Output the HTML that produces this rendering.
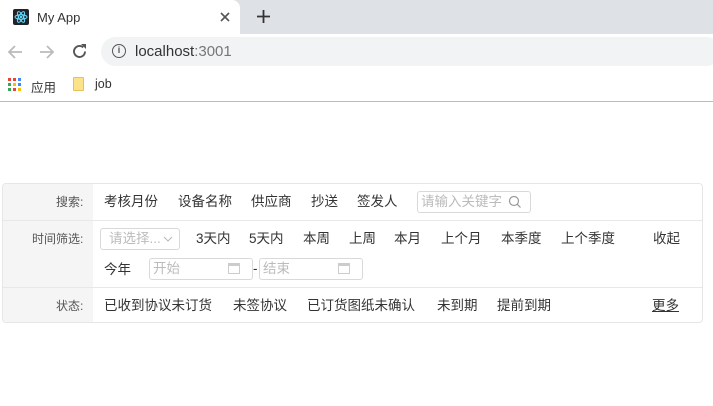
<!DOCTYPE html>
<html><head><meta charset="utf-8"><style>
*{margin:0;padding:0;box-sizing:border-box}
body{width:713px;height:406px;overflow:hidden;background:#fff;font-family:"Liberation Sans","Noto Sans CJK SC",sans-serif;position:relative}
.a{position:absolute;white-space:nowrap}
.t{font-size:13.5px;color:#333;line-height:16px}
.lab{font-size:12px;color:#555;line-height:16px}
.ph{color:#bbb}
.box{position:absolute;border:1px solid #d9d9d9;border-radius:3px;background:#fff}
</style></head><body>
<div class="a" style="left:0;top:0;width:713px;height:34px;background:#dee1e6"></div>
<div class="a" style="left:0;top:0;width:240px;height:34px;background:#fff;border-radius:0 8px 0 0"></div>
<div class="a" style="left:13px;top:9px;width:16px;height:16px;background:#20232a;border-radius:2px"><svg width="16" height="16" viewBox="0 0 16 16"><g fill="none" stroke="#61dafb" stroke-width="1"><ellipse cx="8" cy="8" rx="6" ry="2.3"/><ellipse cx="8" cy="8" rx="6" ry="2.3" transform="rotate(60 8 8)"/><ellipse cx="8" cy="8" rx="6" ry="2.3" transform="rotate(120 8 8)"/></g><circle cx="8" cy="8" r="1.2" fill="#61dafb"/></svg></div>
<div class="a" style="left:37px;top:10px;font-size:13px;color:#333">My App</div>
<svg class="a" style="left:220px;top:12px" width="10" height="10" viewBox="0 0 10 10"><path d="M1 1L9 9M9 1L1 9" stroke="#555" stroke-width="1.6"/></svg>
<svg class="a" style="left:257px;top:10px" width="13" height="13" viewBox="0 0 13 13"><path d="M6.5 0V13M0 6.5H13" stroke="#333" stroke-width="1.8"/></svg>
<svg class="a" style="left:7px;top:44px" width="16" height="16" viewBox="0 0 16 16"><path d="M15 8H2M8 2L2 8L8 14" fill="none" stroke="#bbb" stroke-width="1.8"/></svg>
<svg class="a" style="left:39px;top:44px" width="16" height="16" viewBox="0 0 16 16"><path d="M1 8H14M8 2L14 8L8 14" fill="none" stroke="#bbb" stroke-width="1.8"/></svg>
<svg class="a" style="left:71px;top:43px" width="17" height="17" viewBox="0 0 17 17"><path d="M14 8.5A5.5 5.5 0 1 1 12.2 4.4" fill="none" stroke="#555" stroke-width="1.9"/><path d="M10 1H15V6Z" fill="#555"/></svg>
<div class="a" style="left:101px;top:37px;width:620px;height:29px;background:#f1f3f4;border-radius:15px"></div>
<div class="a" style="left:112px;top:44px;width:14px;height:14px;border:1.5px solid #555;border-radius:50%;font-size:9px;text-align:center;line-height:11px;color:#555;font-weight:bold">i</div>
<div class="a" style="left:135px;top:43px;font-size:15px;color:#333">localhost<span style="color:#777">:3001</span></div>
<svg class="a" style="left:8px;top:78px" width="13" height="13" viewBox="0 0 13 13">
<rect x="0" y="0" width="3" height="3" fill="#ea4335"/><rect x="5" y="0" width="3" height="3" fill="#ea4335"/><rect x="10" y="0" width="3" height="3" fill="#4285f4"/>
<rect x="0" y="5" width="3" height="3" fill="#34a853"/><rect x="5" y="5" width="3" height="3" fill="#fbbc05"/><rect x="10" y="5" width="3" height="3" fill="#4285f4"/>
<rect x="0" y="10" width="3" height="3" fill="#34a853"/><rect x="5" y="10" width="3" height="3" fill="#ea4335"/><rect x="10" y="10" width="3" height="3" fill="#fbbc05"/></svg>
<div class="a" style="left:31px;top:77px;font-size:12.5px;color:#333">应用</div>
<div class="a" style="left:73px;top:77px;width:11px;height:14px;background:#fce38a;border:1px solid #e5c15a;border-radius:1px"></div>
<div class="a" style="left:95px;top:77px;font-size:12.5px;color:#333">job</div>
<div class="a" style="left:0;top:101px;width:713px;height:1px;background:#bbb"></div>

<div class="a" style="left:2px;top:183px;width:701px;height:140px;border:1px solid #e6e6e6;border-radius:4px;overflow:hidden">
<div class="a" style="left:0;top:0;width:90px;height:140px;background:#f5f5f5"></div>
<div class="a" style="left:0;top:36px;width:701px;height:1px;background:#e8e8e8"></div>
<div class="a" style="left:0;top:103px;width:701px;height:1px;background:#e8e8e8"></div>
</div>
<div class="a lab" style="left:56px;top:194px">搜索:</div>
<div class="a lab" style="left:32px;top:231px">时间筛选:</div>
<div class="a lab" style="left:56px;top:298px">状态:</div>

<div class="a t" style="left:104px;top:194px">考核月份</div>
<div class="a t" style="left:178px;top:194px">设备名称</div>
<div class="a t" style="left:251px;top:194px">供应商</div>
<div class="a t" style="left:311px;top:194px">抄送</div>
<div class="a t" style="left:357px;top:194px">签发人</div>
<div class="box" style="left:417px;top:191px;width:114px;height:22px"></div>
<div class="a t ph" style="left:421px;top:194px">请输入关键字</div>
<svg class="a" style="left:508px;top:195px" width="14" height="14" viewBox="0 0 14 14"><circle cx="6" cy="6" r="4.5" fill="none" stroke="#999" stroke-width="1.2"/><path d="M9.3 9.3L12.5 12.5" stroke="#999" stroke-width="1.2"/></svg>

<div class="box" style="left:100px;top:228px;width:80px;height:22px"></div>
<div class="a t ph" style="left:109px;top:231px">请选择...</div>
<svg class="a" style="left:163px;top:235px" width="10" height="8" viewBox="0 0 10 8"><path d="M1 2L5 6L9 2" fill="none" stroke="#bbb" stroke-width="1.1"/></svg>
<div class="a t" style="left:196px;top:231px">3天内</div>
<div class="a t" style="left:249px;top:231px">5天内</div>
<div class="a t" style="left:303px;top:231px">本周</div>
<div class="a t" style="left:349px;top:231px">上周</div>
<div class="a t" style="left:394px;top:231px">本月</div>
<div class="a t" style="left:441px;top:231px">上个月</div>
<div class="a t" style="left:501px;top:231px">本季度</div>
<div class="a t" style="left:561px;top:231px">上个季度</div>
<div class="a t" style="left:653px;top:231px">收起</div>
<div class="a t" style="left:104px;top:262px">今年</div>
<div class="box" style="left:149px;top:258px;width:104px;height:22px"></div>
<div class="a t ph" style="left:153px;top:261px">开始</div>
<div class="a" style="left:228px;top:263px;width:12px;height:11px;border:1px solid #ccc;border-top-width:3px"></div>
<div class="a t" style="left:253px;top:261px">-</div>
<div class="box" style="left:259px;top:258px;width:104px;height:22px"></div>
<div class="a t ph" style="left:263px;top:261px">结束</div>
<div class="a" style="left:338px;top:263px;width:12px;height:11px;border:1px solid #ccc;border-top-width:3px"></div>

<div class="a t" style="left:104px;top:298px">已收到协议未订货</div>
<div class="a t" style="left:233px;top:298px">未签协议</div>
<div class="a t" style="left:307px;top:298px">已订货图纸未确认</div>
<div class="a t" style="left:437px;top:298px">未到期</div>
<div class="a t" style="left:497px;top:298px">提前到期</div>
<div class="a t" style="left:652px;top:298px;text-decoration:underline">更多</div>
</body></html>
